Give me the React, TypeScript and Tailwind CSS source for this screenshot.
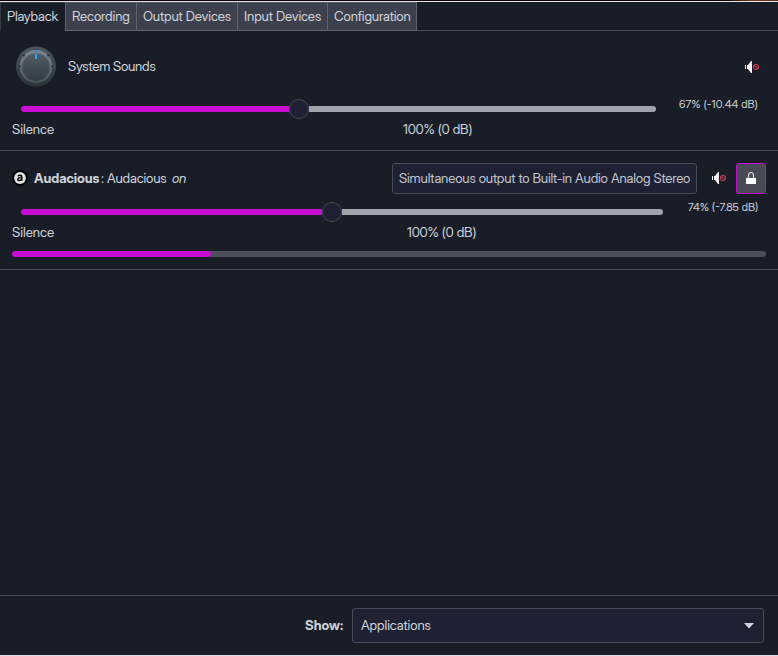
import type { ReactNode } from 'react';

const tabs = [
  { label: 'Recording', box: 'w-[71px] pl-[6px]' },
  { label: 'Output Devices', box: 'w-[101px] pl-[6px]' },
  { label: 'Input Devices', box: 'w-[90px] pl-[6px]' },
  { label: 'Configuration', box: 'w-[89px] pl-[6px]' },
];

function KnobIcon() {
  return (
    <svg width="40" height="42" viewBox="0 0 40 42">
      <defs>
        <linearGradient id="rim" x1="0" y1="0" x2="0" y2="1">
          <stop offset="0" stopColor="#4b555e" />
          <stop offset="1" stopColor="#29343b" />
        </linearGradient>
        <linearGradient id="ring" x1="0" y1="0" x2="0" y2="1">
          <stop offset="0" stopColor="#7d8792" />
          <stop offset="1" stopColor="#46515a" />
        </linearGradient>
        <linearGradient id="face" x1="0" y1="0" x2="0" y2="1">
          <stop offset="0" stopColor="#535d66" />
          <stop offset="1" stopColor="#303b43" />
        </linearGradient>
      </defs>
      <circle cx="20" cy="21" r="19.5" fill="#17242a" />
      <circle cx="20" cy="20.5" r="20" fill="url(#rim)" />
      <circle cx="20" cy="20.5" r="16.5" fill="url(#ring)" />
      <circle cx="20" cy="21" r="13.7" fill="url(#face)" />
      <g fill="#222d35">
        <circle cx="4" cy="20.5" r="1" />
        <circle cx="36" cy="20.5" r="1" />
        <circle cx="8" cy="9.5" r="1" />
        <circle cx="32" cy="9.5" r="1" />
      </g>
      <path d="M19 4h2v2h-2z" fill="#1686d9" />
      <path d="M19 8h2v5h-2z" fill="#20a8f4" />
    </svg>
  );
}

function AudaciousIcon() {
  return (
    <svg width="16" height="16" viewBox="0 0 16 16">
      <circle cx="8" cy="8" r="8" fill="#050607" />
      <circle cx="8" cy="8" r="5.9" fill="#e2e2e2" />
      <path d="M6 6.3C6.3 4.8 9.8 4.7 9.8 6.7V10.8M9.6 7.6C7.4 7.4 5.7 8 5.8 9.3 6 11.1 9.3 10.8 9.7 9" fill="none" stroke="#08090a" strokeWidth="1.5" />
    </svg>
  );
}

function MutedIcon() {
  return (
    <svg width="15" height="12" viewBox="0 0 15 12">
      <path d="M0 4h1v4H0zM2 4h1l3-4h1v12H6L3 8H2z" fill="#f4f4f6" />
      <circle cx="11" cy="6" r="2.5" fill="none" stroke="#cc3d55" strokeWidth="1.1" />
      <path d="m9.3 4.3 3.4 3.4" stroke="#cc3d55" strokeWidth="1.1" />
    </svg>
  );
}

function LockIcon() {
  return (
    <svg className="mb-px" width="10" height="12" viewBox="0 0 10 12">
      <path d="M2.5 6V3.2a2.5 2.7 0 0 1 5 0V6" fill="none" stroke="#d8d8dc" strokeWidth="1.2" />
      <path d="M0 6h10v6H0z" fill="#fff" />
    </svg>
  );
}

function Slider({ width, fill }: { width: string; fill: string }) {
  return (
    <div className={`${width} ml-[21px] flex h-5 items-center`}>
      <div className={`${fill} h-1.5 rounded-l-[3px] bg-[#c70ed2]`} />
      <div className="h-5 w-5 shrink-0 rounded-full border border-[#454754] bg-[#1f2132]" />
      <div className="h-1.5 flex-1 rounded-r-[3px] bg-[#9ea3ae]" />
    </div>
  );
}

function Label({ className = '', children }: { className?: string; children: ReactNode }) {
  return <span className={`block whitespace-nowrap leading-4 ${className}`}>{children}</span>;
}

export default function App() {
  return (
    <div className="flex h-[656px] w-[778px] flex-col overflow-hidden bg-[#191d28] font-['Inter_Display','Inter',sans-serif] text-[13.33px] leading-4 tracking-[-0.19px] text-[#ced3da]">
      <div className="h-px shrink-0 bg-[linear-gradient(90deg,#0b0209_0px,#0b0209_725px,#76441b_755px,#4e2a10_778px)]" />
      <div className="h-px shrink-0 bg-[#e8e4ee]" />

      <nav className="flex h-[29px] shrink-0 tracking-[-0.13px]">
        <div className="w-[66px] border-l border-r border-t border-[#373a45] border-r-[#60626e] pl-[6px] pt-[5px]">
          <Label className="tracking-[-0.2px]">Playback</Label>
        </div>
        {tabs.map((tab) => (
          <div key={tab.label} className={`${tab.box} shrink-0 border-b border-r border-t border-b-[#60626e] border-r-[#60626e] border-t-[#50525f] bg-[#3d404d] pt-[5px]`}>
            <Label>{tab.label}</Label>
          </div>
        ))}
        <div className="flex-1 border-b border-[#494b57]" />
      </nav>

      <section className="h-[120px] shrink-0 border-b border-[#494b57]">
        <div className="flex h-[68px] items-start pt-[15px]">
          <div className="ml-4"><KnobIcon /></div>
          <Label className="ml-3 mt-3 flex-1 tracking-[-0.27px]">System Sounds</Label>
          <div className="mr-[18px] mt-[15px]"><MutedIcon /></div>
        </div>
        <div className="flex h-5">
          <Slider width="w-[635px]" fill="w-[268px]" />
          <Label className="ml-[23px] -mt-[3px] text-[11px] tracking-[0.06px]">67% (-10.44 dB)</Label>
        </div>
        <div className="flex pt-[2px]">
          <Label className="ml-3 w-[391px] tracking-[0px]">Silence</Label>
          <Label>100% (0 dB)</Label>
        </div>
      </section>

      <section className="h-[119px] shrink-0 border-b border-[#494b57]">
        <div className="flex h-[51px] pt-3">
          <div className="ml-3 mt-[7px]"><AudaciousIcon /></div>
          <Label className="ml-[6px] mt-[7px] w-[67px] font-bold tracking-[-0.05px]">Audacious</Label>
          <Label className="mt-[7px] w-[6px]">:</Label>
          <Label className="mt-[7px] w-[65px]">Audacious</Label>
          <Label className="mt-[7px] w-[220px] italic">on</Label>
          <button className="h-[31px] w-[305px] shrink-0 rounded-[3px] border border-[#494b57] bg-[#1f2132] pb-0.5 pl-[6px] text-left leading-4 text-[#bfc3ce]">
            <Label>Simultaneous output to Built-in Audio Analog Stereo</Label>
          </button>
          <div className="ml-[15px] mt-[9px] w-6"><MutedIcon /></div>
          <button className="flex h-[31px] w-[30px] items-center justify-center rounded-[3px] border border-[#c70ed2] bg-[#484b56]"><LockIcon /></button>
        </div>
        <div className="flex h-5">
          <Slider width="w-[642px]" fill="w-[301px]" />
          <Label className="ml-[25px] -mt-[3px] text-[11px] tracking-[0px]">74% (-7.85 dB)</Label>
        </div>
        <div className="flex pt-[2px]">
          <Label className="ml-3 w-[395px] tracking-[0px]">Silence</Label>
          <Label>100% (0 dB)</Label>
        </div>
        <div className="ml-3 mt-[11px] h-1.5 w-[754px] overflow-hidden rounded-[3px] bg-[#4c4e5a]">
          <div className="h-full w-[199px] rounded-[3px] bg-[#c70ed2]" />
        </div>
      </section>

      <main className="flex-1" />

      <footer className="flex h-[60px] shrink-0 border-t border-[#494b57] pt-3">
        <Label className="ml-[305px] mt-[9px] w-[47px] font-bold tracking-[0px]">Show:</Label>
        <button className="flex h-[35px] w-[412px] items-center justify-between rounded-[3px] border border-[#494b57] bg-[#1f2132] pl-2 pr-[9px]">
          <Label className="mb-px tracking-[-0.1px]">Applications</Label>
          <svg width="10" height="6" viewBox="0 0 10 6"><path d="M0 0h10L5 5.5z" fill="#d3d5dc" /></svg>
        </button>
      </footer>
      <div className="h-px shrink-0 bg-[#dddbed]" />
    </div>
  );
}
